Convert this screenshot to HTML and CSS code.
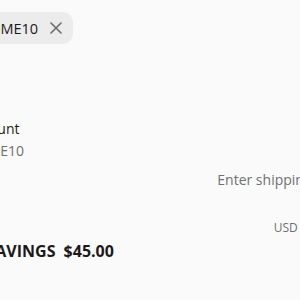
FILE: index.html
```html
<!DOCTYPE html>
<html lang="en">
<head>
<meta charset="utf-8">
<title>Order summary</title>
<link rel="stylesheet" href="styles.css">
</head>
<body>
<div class="summary">
  <div class="chips">
    <span class="chip">
      <svg class="tag" width="14" height="14" viewBox="0 0 14 14"><path d="M1.5 1.5h5l6 6-5 5-6-6z" fill="none" stroke="#6b6b6b" stroke-width="1.3" stroke-linejoin="round"/><circle cx="4.5" cy="4.5" r="1" fill="#6b6b6b"/></svg>
      <span class="chip-code">WELCOME10</span>
      <button class="chip-remove" aria-label="Remove discount">
        <svg width="12" height="12" viewBox="0 0 12 12"><path d="M1 1 L11 11 M11 1 L1 11" stroke="#6b6b6b" stroke-width="1.6" stroke-linecap="round" fill="none"/></svg>
      </button>
    </span>
  </div>
  <div class="lines">
    <div class="row">
      <div class="label">Subtotal</div>
      <div class="value">$450.00</div>
    </div>
    <div class="row">
      <div class="label">
        <div>Order discount</div>
        <div class="muted code"><svg class="tag" width="14" height="14" viewBox="0 0 14 14"><path d="M1.5 1.5h5l6 6-5 5-6-6z" fill="none" stroke="#707070" stroke-width="1.3" stroke-linejoin="round"/><circle cx="4.5" cy="4.5" r="1" fill="#707070"/></svg>WELCOME10</div>
      </div>
      <div class="value">−$45.00</div>
    </div>
    <div class="row shipping">
      <div class="label">Shipping</div>
      <div class="value muted">Enter shipping address</div>
    </div>
    <div class="row total">
      <div class="label">Total</div>
      <div class="value"><span class="currency">USD</span><span class="amount">$405.00</span></div>
    </div>
    <div class="savings">TOTAL SAVINGS <span>$45.00</span></div>
  </div>
</div>
</body>
</html>
```
FILE: styles.css
```css
html, body {
  margin: 0;
  padding: 0;
  background: #fafafa;
}
body {
  font-family: "Open Sans", "Noto Sans", sans-serif;
  font-size: 14px;
  color: #1a1a1a;
  overflow: hidden;
  width: 300px;
  height: 300px;
}
.summary {
  margin-left: -79px;
  width: 446px;
  padding-top: 12px;
}
.chips {
  display: flex;
}
.chip {
  display: inline-flex;
  align-items: center;
  height: 32px;
  padding: 0 11px 0 10px;
  background: #ececec;
  border-radius: 10px;
  font-size: 14.5px;
}
.chip .tag { margin-right: 6px; }
.chip-remove {
  border: 0;
  background: none;
  padding: 0;
  margin-left: 12px;
  display: flex;
}
.lines {
  display: flex;
  flex-direction: column;
  padding-top: 44px;
}
.row {
  display: flex;
  justify-content: space-between;
  line-height: 22px;
}
.row + .row { margin-top: 8px; }
.muted { color: #707070; }
.code {
  display: flex;
  align-items: center;
  gap: 5px;
}
.row.shipping { margin-top: 7px; }
.row.total {
  margin-top: 24px;
  height: 22px;
  align-items: baseline;
}
.total .label { font-weight: 700; font-size: 17px; }
.currency { font-size: 12px; color: #707070; margin-right: 6px; }
.amount { font-size: 17px; font-weight: 700; }
.savings {
  margin-top: 3px;
  font-size: 16px;
  line-height: 22px;
  font-weight: 700;
  padding-left: 10px;
}
.savings span { margin-left: 4px; }
```
